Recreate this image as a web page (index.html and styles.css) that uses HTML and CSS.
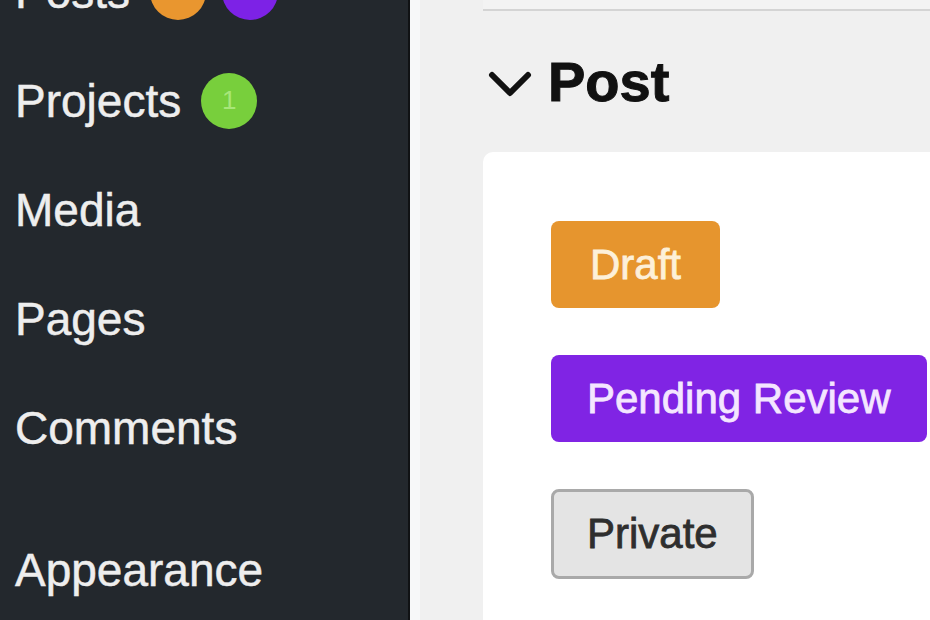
FILE: index.html
```html
<!DOCTYPE html>
<html lang="en">
<head>
    <meta charset="UTF-8">
    <meta name="viewport" content="width=device-width, initial-scale=1.0">
    <title>Post Statuses</title>
    <link rel="stylesheet" href="styles.css">
</head>
<body>
    <div class="admin">
        <nav class="sidebar">
            <ul class="menu">
                <li class="menu-item">Posts <span class="count count-draft">3</span><span class="count count-pending">1</span></li>
                <li class="menu-item">Projects <span class="count count-new">1</span></li>
                <li class="menu-item">Media</li>
                <li class="menu-item">Pages</li>
                <li class="menu-item">Comments</li>
                <li class="menu-sep"></li>
                <li class="menu-item">Appearance</li>
            </ul>
        </nav>
        <main class="content">
            <div class="prev-card"></div>
            <h2 class="section-title">
                <svg class="chevron" width="44" height="30" viewBox="0 0 44 30">
                    <path d="M4 6 L22 24 L40 6" fill="none" stroke="#111" stroke-width="6" stroke-linecap="round" stroke-linejoin="round"/>
                </svg>
                Post
            </h2>
            <div class="card">
                <span class="status status-draft">Draft</span>
                <span class="status status-pending">Pending Review</span>
                <span class="status status-private">Private</span>
            </div>
        </main>
    </div>
</body>
</html>
```

FILE: styles.css
```css
body {
    margin: 0;
    font-family: "Liberation Sans", Arial, sans-serif;
    background-color: #f0f0f0;
    overflow: hidden;
}
.admin {
    display: flex;
    height: 620px;
}
.sidebar {
    width: 408px;
    flex-shrink: 0;
    background-color: #23282d;
    border-right: 2px solid #101214;
    overflow: hidden;
}
.menu {
    list-style: none;
    margin: -63px 0 0;
    padding: 0 0 0 15px;
}
.menu-item {
    display: flex;
    align-items: center;
    height: 109px;
    font-size: 46px;
    color: #eeeeee;
    white-space: nowrap;
    -webkit-text-stroke: 0.5px #eeeeee;
}
.menu-sep {
    height: 33px;
}
.count {
    display: inline-flex;
    align-items: center;
    justify-content: center;
    width: 56px;
    height: 56px;
    border-radius: 50%;
    font-size: 26px;
    margin-left: 20px;
    -webkit-text-stroke: 0;
}
.count + .count {
    margin-left: 16px;
}
.count-draft {
    background-color: #e9962f;
    color: #f7c27a;
}
.count-pending {
    background-color: #7d22e6;
    color: #b27cf5;
}
.count-new {
    background-color: #78cf3c;
    color: #a8e67a;
}
.content {
    flex: 1;
    padding-left: 63px;
    border-left: 10px solid #f7f8f9;
}
.prev-card {
    height: 9px;
    border-bottom: 2px solid #d4d4d4;
    background-color: #f3f3f3;
}
.section-title {
    display: flex;
    align-items: center;
    gap: 16px;
    margin: 0;
    height: 141px;
    padding-left: 5px;
    font-size: 56px;
    font-weight: bold;
    color: #111;
    -webkit-text-stroke: 1px #111;
}
.chevron {
    margin-top: 4px;
}
.card {
    display: flex;
    flex-direction: column;
    align-items: flex-start;
    gap: 47px;
    background-color: #fff;
    border-top-left-radius: 10px;
    padding: 69px 0 0 68px;
    height: 400px;
}
.status {
    display: inline-block;
    font-size: 42px;
    line-height: 87px;
    padding: 0 36px;
    border-radius: 8px;
    white-space: nowrap;
    -webkit-text-stroke: 0.8px currentColor;
}
.status-draft {
    background-color: #e6952e;
    color: #fdf0d9;
    padding: 0 39px;
}
.status-pending {
    background-color: #8024e4;
    color: #f4e6ff;
}
.status-private {
    background-color: #e4e4e4;
    color: #2e2e2e;
    border: 3px solid #a9a9a9;
    padding: 0 33px;
    line-height: 84px;
}
```
